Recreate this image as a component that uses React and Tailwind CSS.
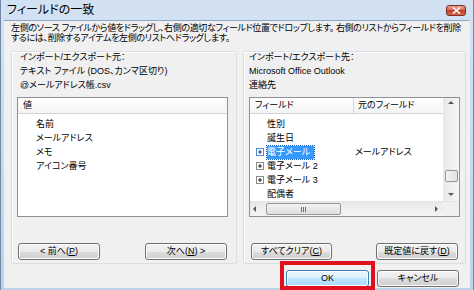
import React from 'react';

const font = "font-['Liberation_Sans','Noto_Sans_CJK_JP',sans-serif] [font-feature-settings:'palt']";

const Btn = ({ children, className = '', primary = false }) => (
  <div
    className={`flex items-center justify-center h-[17px] rounded-[3px] border text-[9px] leading-none text-black shadow-[inset_0_0_0_1px_#fcfcfc] ${
      primary
        ? 'border-[#3c7fb1] bg-[linear-gradient(#eaf6fd_0%,#d9f0fc_50%,#bee6fd_50%,#a7d9f5_100%)]'
        : 'border-[#707070] bg-[linear-gradient(#f2f2f2_0%,#ebebeb_50%,#dddddd_50%,#cfcfcf_100%)]'
    } ${className}`}
  >
    {children}
  </div>
);

const Expand = ({ active }) => (
  <svg width="8" height="8" viewBox="0 0 8 8" className="shrink-0">
    <rect x="0.5" y="0.5" width="7" height="7" fill="#fff" stroke={active ? '#4a8ad0' : '#8c8c8c'} />
    <path d="M2 4h4M4 2v4" stroke={active ? '#1e3c6e' : '#222'} />
  </svg>
);

const Arrow = ({ dir }) => {
  const d = {
    up: 'M0 4L3 1L6 4Z',
    down: 'M0 1L3 4L6 1Z',
    left: 'M4 0L1 3L4 6Z',
    right: 'M1 0L4 3L1 6Z',
  }[dir];
  return (
    <svg width="6" height="6" viewBox="0 0 6 6">
      <path d={d} fill="#5a5a5a" />
    </svg>
  );
};

const headerBg = 'bg-[linear-gradient(#ffffff,#f3f4f6)] border-b border-[#d5d5d5]';

const rightRows = [
  { name: '性別' },
  { name: '誕生日' },
  { name: '電子メール', plus: true, active: true, src: 'メールアドレス' },
  { name: '電子メール 2', plus: true },
  { name: '電子メール 3', plus: true },
  { name: '配偶者' },
  { name: 'ニックネーム' },
];

export default function App() {
  return (
    <div className={`relative w-[474px] h-[290px] overflow-hidden bg-[linear-gradient(#d3e2f3,#bdd3eb)] border-l border-r border-[#6f8aa8] ${font}`}>
      {/* title bar */}
      <div className="h-[20px] flex items-center justify-between pl-[6px] pr-[7px]">
        <span className="text-[12px] leading-none text-black">フィールドの一致</span>
        <div className="w-[20px] h-[11px] rounded-[3px] border border-[#7a2d22] bg-[linear-gradient(#e8a493,#d1644f_50%,#c2402a_50%,#d56a4c)] flex items-center justify-center">
          <svg width="9" height="7" viewBox="0 0 9 7">
            <path d="M1 0.5L8 6.5M8 0.5L1 6.5" stroke="#fff" strokeWidth="1.6" />
          </svg>
        </div>
      </div>

      {/* body */}
      <div className="mx-[3px] h-[268px] bg-[#f0f0f0] border-t border-[#8ea6c2] pl-[7px] pr-[3px] pt-[2px] flex flex-col">
        <p className="text-[9px] leading-[10px] tracking-[-0.35px] text-black whitespace-nowrap">
          左側のソース ファイルから値をドラッグし、右側の適切なフィールド位置でドロップします。 右側のリストからフィールドを削除
          <br />
          するには、削除するアイテムを左側のリストへドラッグします。
        </p>

        <div className="mt-[8px] flex gap-[6px]">
          {/* left group */}
          <div className="w-[226px] h-[213px] rounded-[3px] border border-[#d5dfe5] shadow-[inset_1px_1px_0_#fff] pl-[5px] pr-[8px] pb-[3px] flex flex-col">
            <div className="-mt-[2px] pl-[3px] text-[9px] leading-[14px] text-black">
              <div>インポート/エクスポート元：</div>
              <div>テキスト ファイル (DOS、カンマ区切り)</div>
              <div>@メールアドレス帳.csv</div>
            </div>
            <div className="mt-[5px] h-[120px] border border-[#8e9196] bg-white flex flex-col">
              <div className={`h-[16px] shrink-0 pl-[5px] flex items-center text-[9px] ${headerBg}`}>値</div>
              <div className="pt-[3px] pl-[18px] text-[9px] leading-[14px] text-black">
                <div>名前</div>
                <div>メールアドレス</div>
                <div>メモ</div>
                <div>アイコン番号</div>
              </div>
            </div>
            <div className="mt-auto flex justify-between px-[1px]">
              <Btn className="w-[82px]">
                <span>&lt; 前へ(<span className="underline">P</span>)</span>
              </Btn>
              <Btn className="w-[82px]">
                <span>次へ(<span className="underline">N</span>) &gt;</span>
              </Btn>
            </div>
          </div>

          {/* right group */}
          <div className="w-[223px] h-[213px] rounded-[3px] border border-[#d5dfe5] shadow-[inset_1px_1px_0_#fff] px-[5px] pb-[3px] flex flex-col">
            <div className="-mt-[2px] text-[9px] leading-[14px] text-black">
              <div>インポート/エクスポート先：</div>
              <div>Microsoft Office Outlook</div>
              <div>連絡先</div>
            </div>
            <div className="mt-[5px] h-[120px] border border-[#8e9196] bg-white flex flex-col">
              <div className="flex h-[103px]">
                <div className="flex-1 flex flex-col overflow-hidden">
                  <div className={`h-[16px] shrink-0 flex text-[9px] ${headerBg}`}>
                    <div className="w-[104px] pl-[5px] flex items-center border-r border-[#d5d5d5]">フィールド</div>
                    <div className="flex-1 pl-[4px] flex items-center">元のフィールド</div>
                  </div>
                  <div className="pt-[3px] text-[9px] leading-[14px] text-black">
                    {rightRows.map((r) => (
                      <div key={r.name} className="flex h-[14px] items-center">
                        <div className="w-[17px] pl-[6px] flex items-center">{r.plus && <Expand active={r.active} />}</div>
                        <div className="w-[88px]">
                          <span className={r.active ? 'inline-block bg-[#3399ff] text-white leading-[13px] pr-[4px] outline outline-1 outline-dotted outline-[#1a5fb4]' : ''}>{r.name}</span>
                        </div>
                        <div>{r.src}</div>
                      </div>
                    ))}
                  </div>
                </div>
                <div className="w-[16px] bg-[linear-gradient(90deg,#e8e8e8,#f5f5f5)] flex flex-col items-center pt-[2px] pb-[3px]">
                  <Arrow dir="up" />
                  <div className="mt-[64px] w-[13px] h-[12px] rounded-[2px] border border-[#979797] bg-[linear-gradient(90deg,#f3f3f3,#e0e0e0)]" />
                  <div className="mt-auto">
                    <Arrow dir="down" />
                  </div>
                </div>
              </div>
              <div className="flex h-[15px] border-t border-[#e5e5e5]">
                <div className="flex-1 bg-[linear-gradient(#e8e8e8,#f5f5f5)] flex items-center pl-[2px] pr-[3px]">
                  <Arrow dir="left" />
                  <div className="ml-[8px] w-[75px] h-[12px] rounded-[2px] border border-[#979797] bg-[linear-gradient(#f3f3f3,#dedede)] flex items-center justify-center">
                    <svg width="6" height="5" viewBox="0 0 6 5">
                      <path d="M0.5 0v5M2.5 0v5M4.5 0v5" stroke="#6e6e6e" />
                    </svg>
                  </div>
                  <div className="ml-auto">
                    <Arrow dir="right" />
                  </div>
                </div>
                <div className="w-[16px] bg-[#f0f0f0]" />
              </div>
            </div>
            <div className="mt-auto flex justify-between px-[2px]">
              <Btn className="w-[81px]">
                <span>すべてクリア(<span className="underline">C</span>)</span>
              </Btn>
              <Btn className="w-[82px]">
                <span>既定値に戻す(<span className="underline">D</span>)</span>
              </Btn>
            </div>
          </div>
        </div>

        <div className="mt-[6px] flex justify-end gap-[8px] pr-[8px]">
          <Btn primary className="w-[83px]">OK</Btn>
          <Btn className="w-[82px]">キャンセル</Btn>
        </div>
      </div>

      {/* red highlight around OK */}
      <div className="absolute left-[279px] top-[261px] w-[95px] h-[29px] border-[4px] border-[#e0101c]" />
    </div>
  );
}
